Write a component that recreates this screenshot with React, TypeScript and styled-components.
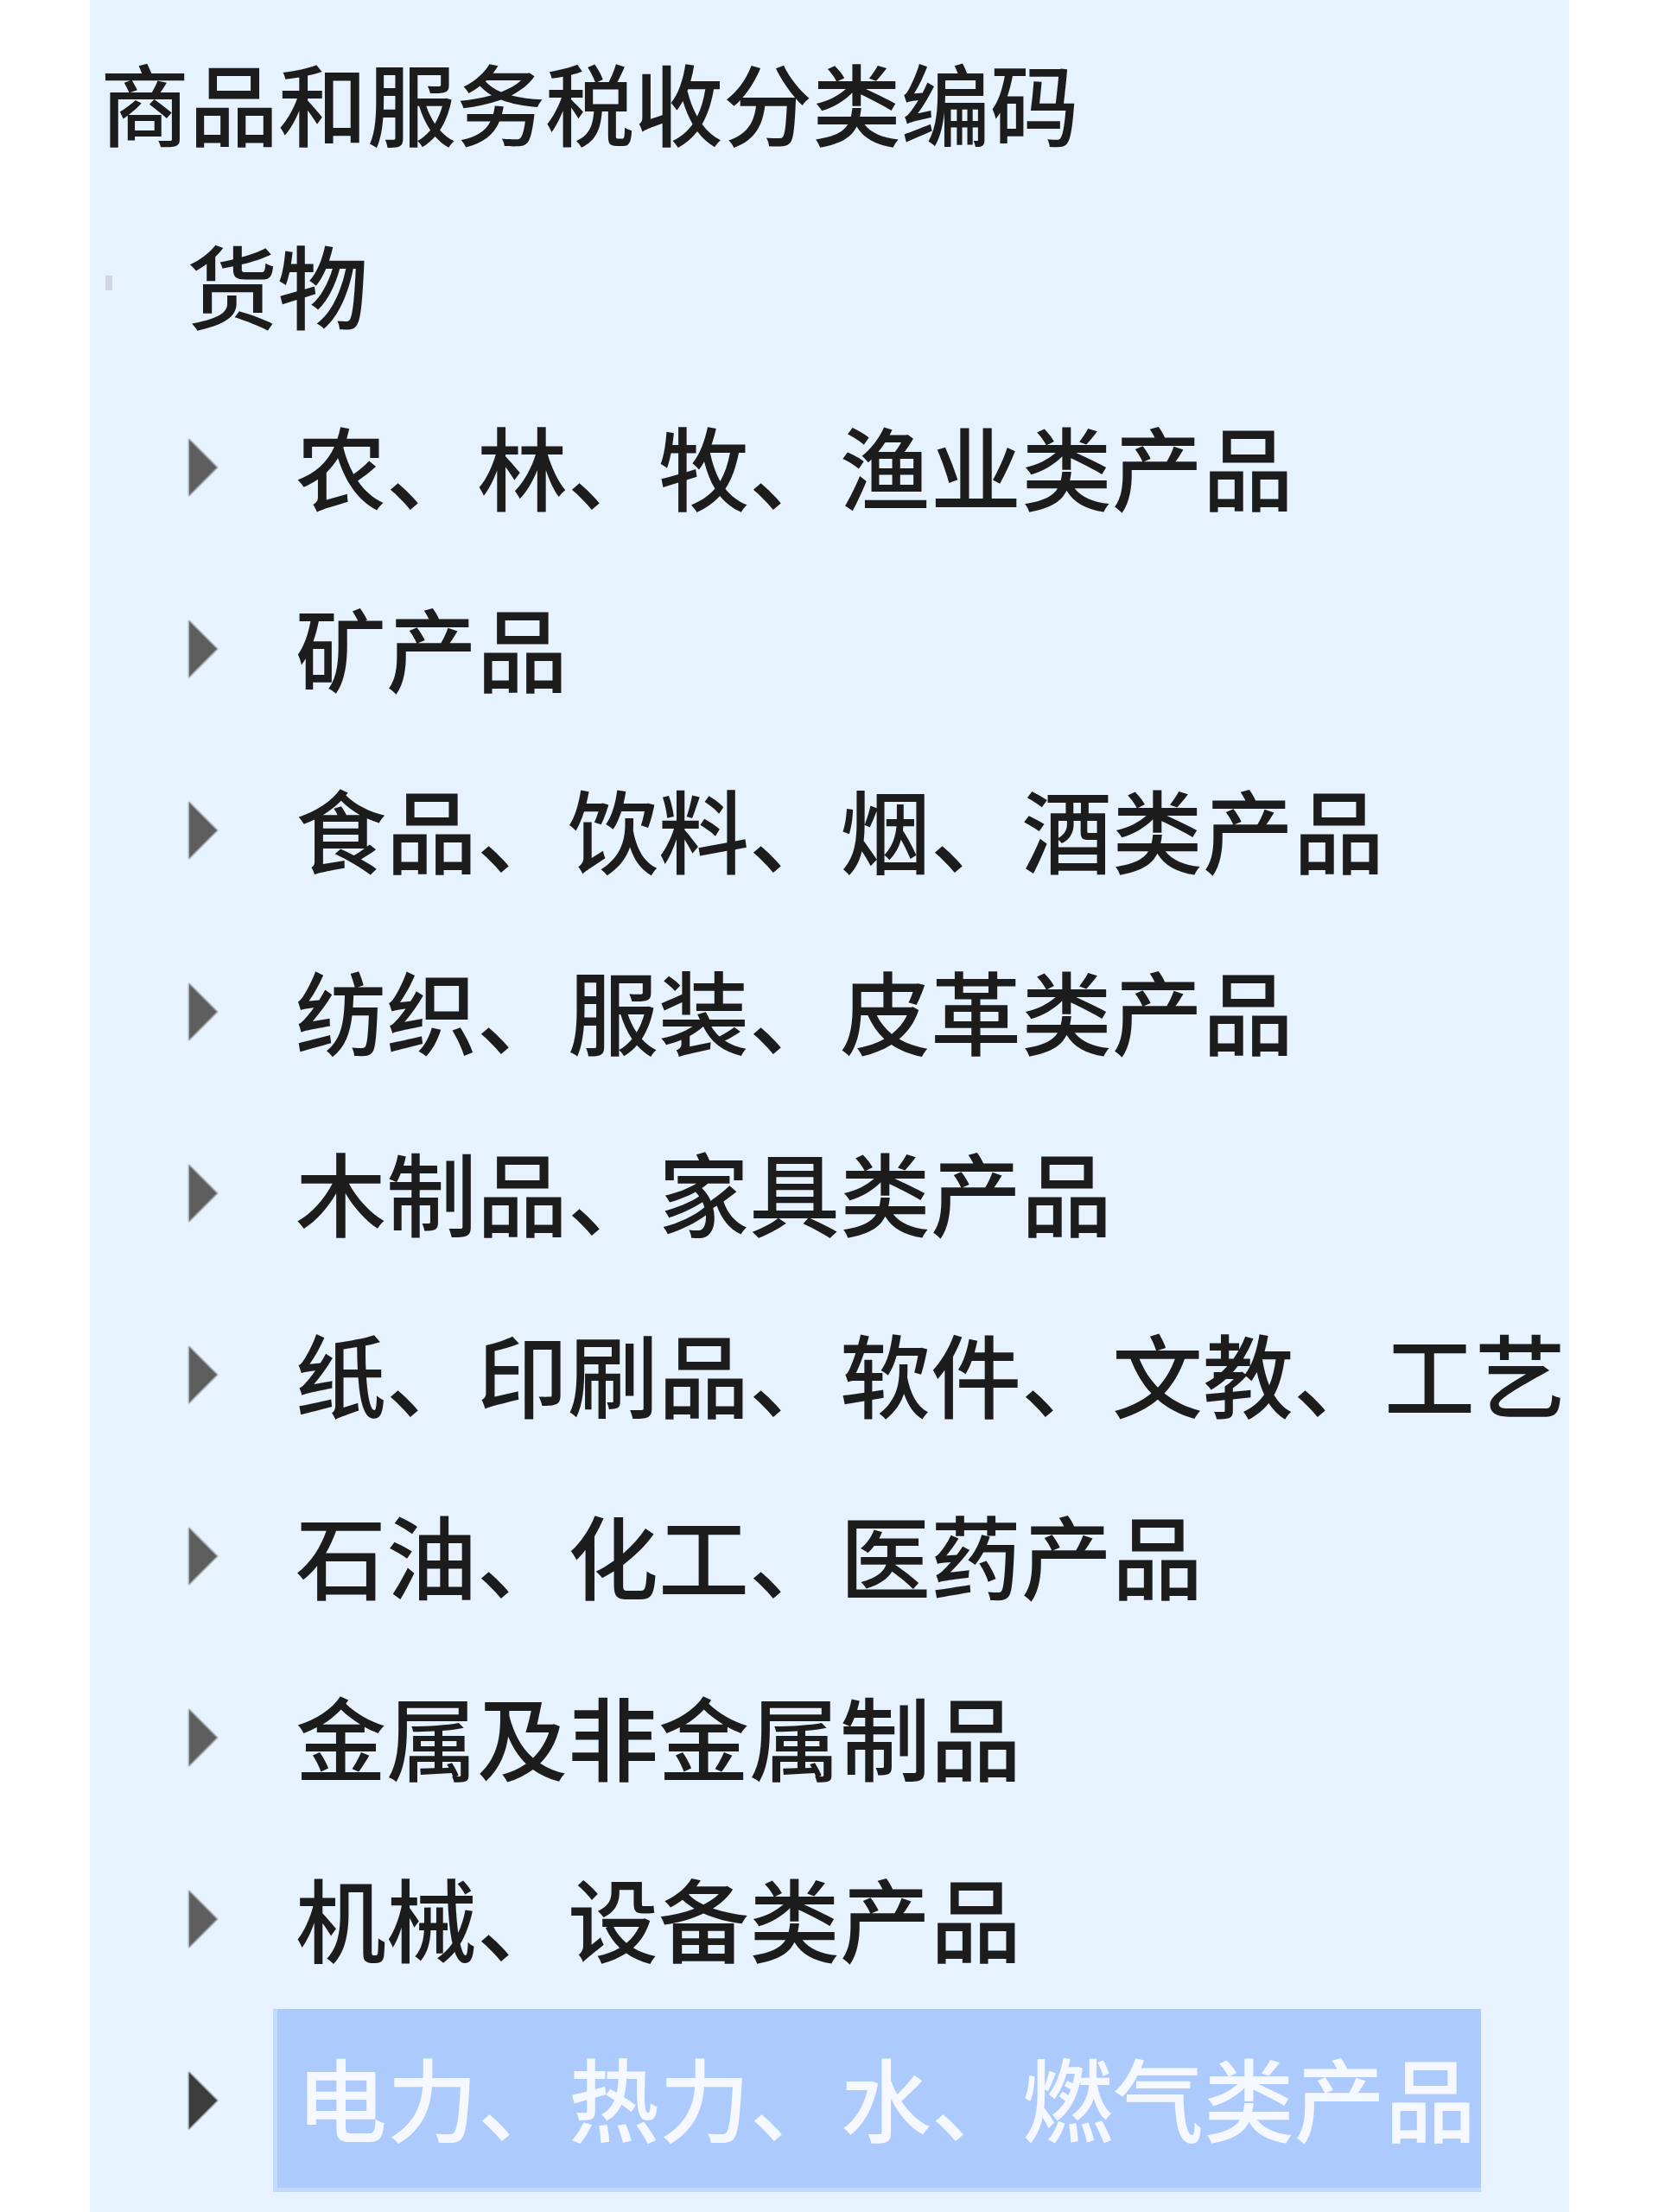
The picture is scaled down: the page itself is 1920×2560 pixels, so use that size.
import React from 'react';
import styled, { createGlobalStyle } from 'styled-components';

const GlobalStyle = createGlobalStyle`
  html, body {
    margin: 0;
    padding: 0;
    background: #ffffff;
  }
  * {
    box-sizing: border-box;
  }
`;

const categories = [
  '农、林、牧、渔业类产品',
  '矿产品',
  '食品、饮料、烟、酒类产品',
  '纺织、服装、皮革类产品',
  '木制品、家具类产品',
  '纸、印刷品、软件、文教、工艺',
  '石油、化工、医药产品',
  '金属及非金属制品',
  '机械、设备类产品',
  '电力、热力、水、燃气类产品',
];

const selectedIndex = 9;

const Caret = ({ dark }: { dark?: boolean }) => (
  <svg width="38" height="72" viewBox="0 0 38 72">
    <polygon
      points="3,4 35,36 3,68"
      fill={dark ? '#3c3c3c' : '#5e5e5e'}
      stroke={dark ? 'rgba(60,60,60,0.45)' : 'rgba(110,110,110,0.45)'}
      strokeWidth="3"
      strokeLinejoin="round"
    />
  </svg>
);

export default function App() {
  return (
    <>
      <GlobalStyle />
      <Page>
        <Panel>
          <TreeList>
            <NodeRow $level={0}>
              <Label $size={103}>商品和服务税收分类编码</Label>
            </NodeRow>
            <NodeRow $level={0}>
              <Switcher>
                <LeafDot />
              </Switcher>
              <Label>货物</Label>
            </NodeRow>
            {categories.map((name, i) => (
              <NodeRow key={name} $level={1}>
                <Switcher>
                  <Caret dark={i === selectedIndex} />
                </Switcher>
                <ChildLabel $selected={i === selectedIndex}>{name}</ChildLabel>
              </NodeRow>
            ))}
          </TreeList>
        </Panel>
      </Page>
    </>
  );
}

const Page = styled.div`
  display: flex;
  width: 1920px;
  height: 2560px;
  padding-left: 104px;
  background: #ffffff;
`;

const Panel = styled.div`
  width: 1712px;
  height: 100%;
  background-color: #e6f3fe;
  padding: 16px 0 0 12px;
  overflow: hidden;
`;

const TreeList = styled.ul`
  list-style: none;
  margin: 0;
  padding: 0;
`;

const NodeRow = styled.li<{ $level: number }>`
  display: flex;
  align-items: center;
  height: 210px;
  padding-left: ${(p) => p.$level * 100}px;
  white-space: nowrap;
`;

const Switcher = styled.span`
  display: flex;
  align-items: center;
  flex: 0 0 100px;
  width: 100px;
  height: 100%;
`;

const LeafDot = styled.span`
  display: block;
  width: 8px;
  height: 17px;
  margin: -8px 0 0 6px;
  background: #cfd7df;
`;

const Label = styled.span<{ $size?: number }>`
  display: flex;
  align-items: center;
  height: 100%;
  padding-bottom: 8px;
  font-family: 'Noto Sans CJK SC', 'Noto Sans', sans-serif;
  font-size: ${(p) => p.$size ?? 105}px;
  font-weight: 500;
  color: #1c1c1c;
`;

const ChildLabel = styled.span<{ $selected?: boolean }>`
  display: flex;
  align-items: center;
  height: ${(p) => (p.$selected ? '212px' : '210px')};
  padding: 0 6px 8px ${(p) => (p.$selected ? '22px' : '26px')};
  font-family: 'Noto Sans CJK SC', 'Noto Sans', sans-serif;
  font-size: 105px;
  font-weight: 500;
  color: ${(p) => (p.$selected ? '#f5f8ff' : '#1c1c1c')};
  background-color: ${(p) => (p.$selected ? '#adcafc' : 'transparent')};
  border-left: ${(p) => (p.$selected ? '5px solid #c3d9fb' : 'none')};
  border-bottom: ${(p) => (p.$selected ? '5px solid #c3d9fb' : 'none')};
`;
